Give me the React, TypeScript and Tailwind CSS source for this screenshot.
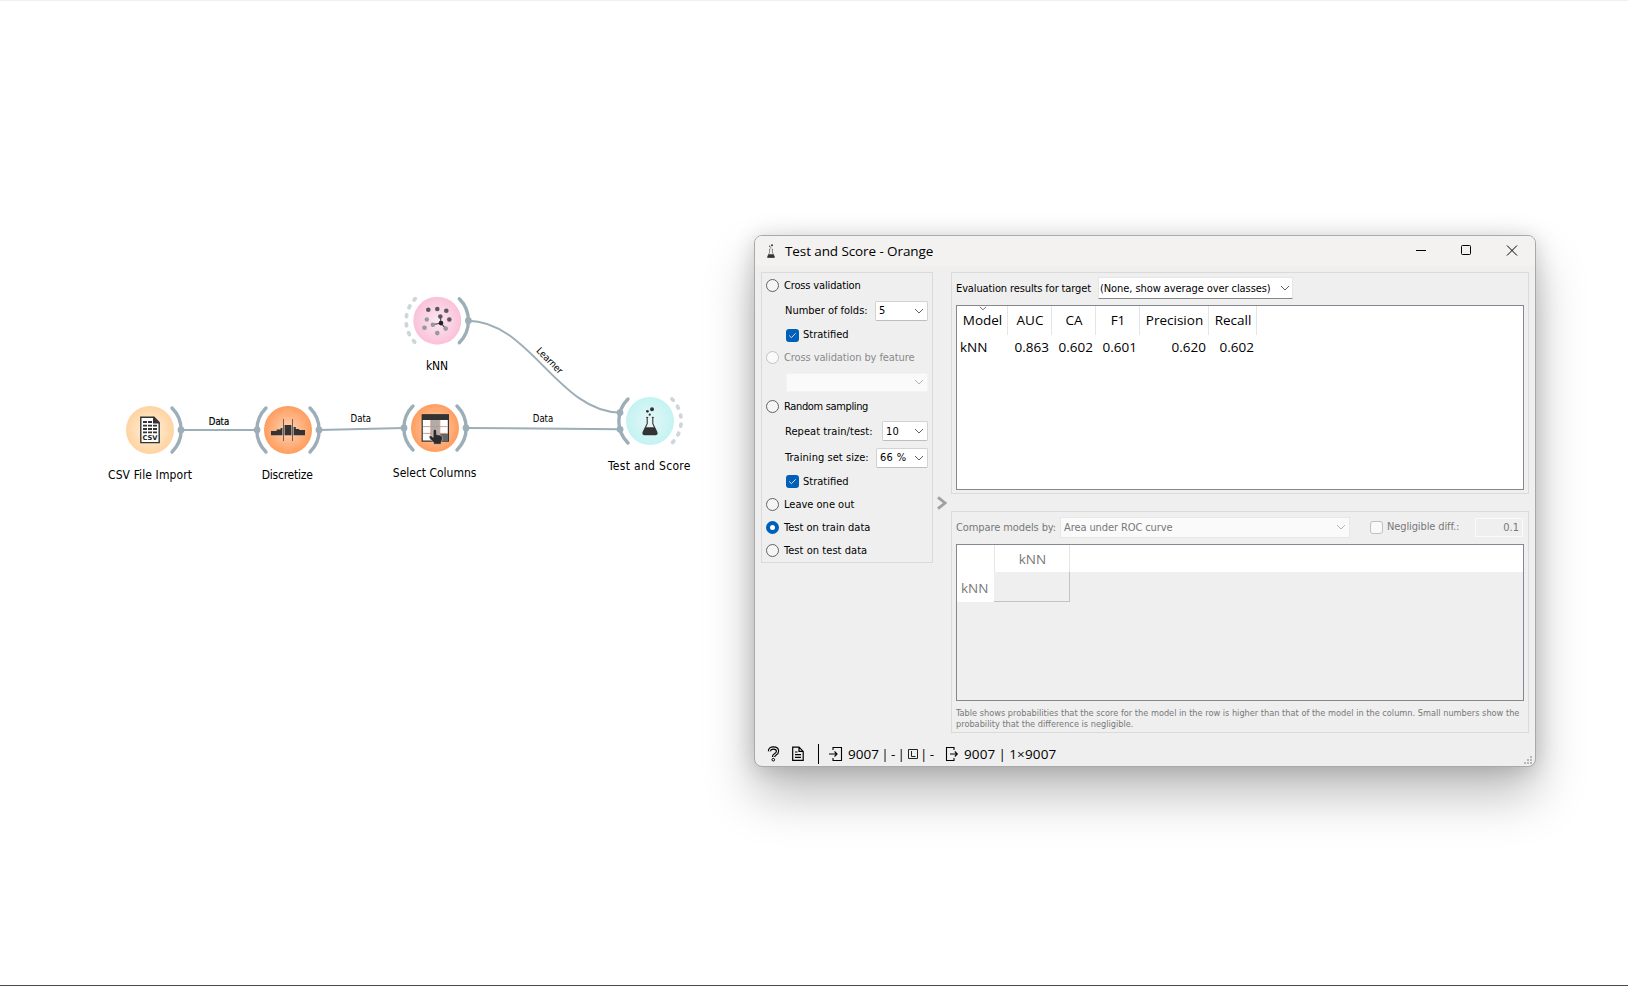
import React from "react";

const ROW = "flex items-center whitespace-nowrap";

function Chevron({ className = "text-[#5f5f5f]" }: { className?: string }) {
  return (
    <svg className={className} width="10" height="6" viewBox="0 0 10 6" fill="none" stroke="currentColor">
      <path d="M1 1l4 4 4-4" />
    </svg>
  );
}

function Radio({ checked, disabled }: { checked?: boolean; disabled?: boolean }) {
  if (checked) return <span className="h-[13px] w-[13px] shrink-0 rounded-full border-4 border-[#005fb8] bg-white" />;
  return (
    <span
      className={
        disabled
          ? "h-[13px] w-[13px] shrink-0 rounded-full border border-[#c3c3c3] bg-[#fafafa]"
          : "h-[13px] w-[13px] shrink-0 rounded-full border border-[#626262] bg-[#f5f5f5]"
      }
    />
  );
}

function Check() {
  return (
    <span className="flex h-[13px] w-[13px] shrink-0 items-center justify-center rounded-[3px] bg-[#005fb8]">
      <svg width="9" height="7" viewBox="0 0 9 7" fill="none" stroke="#cfe2f5">
        <path d="M1.2 3.5l2.2 2.2 4.3-4.4" />
      </svg>
    </span>
  );
}

function Option({ label, tracking = "", checked, disabled }: { label: string; tracking?: string; checked?: boolean; disabled?: boolean }) {
  return (
    <div className={`${ROW} gap-[5px] pl-1 ${disabled ? "text-[#8a8a8a]" : ""}`}>
      <Radio checked={checked} disabled={disabled} />
      <span className={`pt-0.5 ${tracking}`}>{label}</span>
    </div>
  );
}

function Spin({ value, size }: { value: string; size: string }) {
  return (
    <span className={`${size} flex h-5 items-center justify-between rounded-[2px] border border-[#d2d2d2] border-b-[#bdbdbd] bg-white pr-[3px] pl-[3px]`}>
      <span className="pt-0.5 tracking-[0.3px]">{value}</span>
      <Chevron />
    </span>
  );
}

function Flask() {
  return (
    <g>
      <path d="M-2.8-3.5v6.2L-6.8 11q-1.1 2.6 1.6 2.6h10.4q2.7 0 1.6-2.6L2.8 2.7v-6.2" fill="none" stroke="#333" strokeWidth="1.1" />
      <path d="M-3.8-3.6h2M1.8-3.6h2" stroke="#333" strokeWidth="1" />
      <path d="M-4.6 6.3h9.2L7 11.6q.6 2-1.4 2H-5.6q-2 0-1.4-2z" fill="#333" />
      <circle cx="-2.6" cy="-9.7" r="1.4" fill="#333" />
      <circle cx="2" cy="-11.7" r="2" fill="#333" />
      <circle cx="-.3" cy="-6.3" r="1.1" fill="#333" />
    </g>
  );
}

const RIGHT = "M22-22A31 31 0 0 1 22 22";
const LEFT = "M-22-22A31 31 0 0 0-22 22";

function Workflow() {
  return (
    <svg className="absolute -top-px left-0 font-['DejaVu_Sans_Condensed','DejaVu_Sans',sans-serif]" width="740" height="560">
      <defs>
        <radialGradient id="cream"><stop offset="0" stopColor="#fff2e0" /><stop offset="1" stopColor="#ffd39f" /></radialGradient>
        <radialGradient id="orange"><stop offset="0" stopColor="#ffd3b6" /><stop offset="1" stopColor="#ff9d5e" /></radialGradient>
        <radialGradient id="pink"><stop offset="0" stopColor="#fce8f1" /><stop offset="1" stopColor="#fac1d9" /></radialGradient>
        <radialGradient id="aqua"><stop offset="0" stopColor="#e6f7f6" /><stop offset="1" stopColor="#c3f3f3" /></radialGradient>
      </defs>
      <g fill="none" stroke="#9caeb7" strokeWidth="2">
        <path d="M181 430H257M319 430L404 428M466 428L620 429.3M468 320.7C529 320.7 559 412.5 620 412.5" />
      </g>
      <g fill="none" stroke="#9caeb7" strokeWidth="3.4" strokeLinecap="round">
        <path transform="translate(150 430)" d={RIGHT} />
        <path transform="translate(288 430)" d={RIGHT + LEFT} />
        <path transform="translate(435 428)" d={RIGHT + LEFT} />
        <path transform="translate(437.3 320.7)" d={RIGHT} />
        <path transform="translate(650 421)" d={LEFT} />
      </g>
      <g fill="none" stroke="#cdd6db" strokeWidth="3.8" strokeLinecap="round" strokeDasharray="1.8 7.4">
        <path transform="translate(437.3 320.7)" d={LEFT} />
        <path transform="translate(650 421)" d={RIGHT} />
      </g>
      <g fill="#9caeb7">
        <circle cx="181" cy="430" r="3.4" /><circle cx="257" cy="430" r="3.4" /><circle cx="319" cy="430" r="3.4" />
        <circle cx="404" cy="428" r="3.4" /><circle cx="466" cy="428" r="3.4" /><circle cx="468.4" cy="320.7" r="3.4" />
        <circle cx="620" cy="412.6" r="3.4" /><circle cx="620" cy="429.3" r="3.4" />
      </g>
      <circle cx="150" cy="430" r="24" fill="url(#cream)" />
      <circle cx="288" cy="430" r="24" fill="url(#orange)" />
      <circle cx="435" cy="428" r="24" fill="url(#orange)" />
      <circle cx="437.3" cy="320.7" r="24" fill="url(#pink)" />
      <circle cx="650" cy="421" r="24" fill="url(#aqua)" />

      <g transform="translate(150 430)">
        <path d="M-9.2-12.8H4L9.2-7.4V12.6H-9.2z" fill="#fff" stroke="#333" strokeWidth="1.4" />
        <path d="M3-13.4L9.8-6.6H3z" fill="#333" />
        <path d="M-7-8H2M-7-4.4H7M-7-1H7M-7 2.4H7" stroke="#333" strokeWidth="1.9" strokeDasharray="4 1" />
        <text x="0" y="10.4" textAnchor="middle" fontSize="6.6" fontWeight="bold" fill="#222" textLength="15" lengthAdjust="spacingAndGlyphs">CSV</text>
      </g>
      <g transform="translate(288 430)" fill="#333">
        <path d="M-17 5.3V1h5.6v-1.6h4V-2h1.8v7.3zM-3.4-5H3.4V5.3H-3.4zM5.6 5.3V-3h2.2v2h3.4v1H17v5.3z" />
        <path d="M-4.5-11V11M4.5-11V11" stroke="#555" strokeWidth=".9" />
      </g>
      <g transform="translate(435 428)">
        <path d="M-12.8-13.2H13.4V13.2H-12.8z" fill="#fff" stroke="#333" strokeWidth="1.2" />
        <path d="M-4-8H4.6V13H-4z" fill="#b3aba7" />
        <path d="M5 5.5H13V13H5z" fill="#666" />
        <path d="M-13-13.6H13.8V-8H-13z" fill="#333" />
        <path d="M-12-1.4H12.6M-12 5.4H12.6M-4.2-8V12.4M4.8-8V12.4" stroke="#bf9b88" strokeWidth=".9" />
        <path
          d="M-1.8 3q0-1.8 1.7-1.8T1.6 3v3.6q3.6.2 4.9 1.2 1.2 1 .9 3.4l-1.2 3v2H-1.4v-1.8L-5.4 10.2q-1.2-1.9.4-2.4 1.7-.3 3.2 1.6z"
          fill="#2b2b2b"
          stroke="#fff"
          strokeWidth=".4"
        />
      </g>
      <g transform="translate(437.3 320.7)">
        <g fill="#5a5a5a">
          <circle cx="-9" cy="-11" r="2.3" /><circle cx="0" cy="-11.7" r="2.3" /><circle cx="9" cy="-10" r="2.3" />
          <circle cx="12" cy="-1.2" r="2.3" /><circle cx="3" cy="-4.2" r="2.3" />
        </g>
        <path d="M3-4.2L3.7 2.4-4.3 4M3.7 2.4L8.3 7.8" stroke="#555" strokeWidth="1.2" fill="none" />
        <g fill="#999">
          <circle cx="-10.5" cy="-1.2" r="2.2" /><circle cx="-12.8" cy="7" r="2.3" /><circle cx="-4.4" cy="4" r="2.3" />
          <circle cx="0" cy="12.4" r="2.3" /><circle cx="8.4" cy="7.9" r="2.3" />
        </g>
        <circle cx="3.7" cy="2.4" r="2.3" fill="#222" />
      </g>
      <g transform="translate(650 421)"><Flask /></g>

      <g fontSize="12" textAnchor="middle" fill="#000">
        <text x="150" y="479" textLength="84">CSV File Import</text>
        <text x="287.3" y="479" textLength="51">Discretize</text>
        <text x="434.6" y="477" textLength="83.5">Select Columns</text>
        <text x="437" y="370" textLength="22">kNN</text>
        <text x="649.2" y="470" textLength="82.5">Test and Score</text>
      </g>
      <g fontSize="9.6" textAnchor="middle" fill="#000">
        <text x="219" y="425" textLength="20.4" stroke="#000" strokeWidth=".2">Data</text>
        <text x="360.8" y="422" textLength="20.4">Data</text>
        <text x="543" y="422" textLength="20.4">Data</text>
        <text transform="translate(547.4 362.8) rotate(45)" textLength="33">Learner</text>
      </g>
    </svg>
  );
}

function TitleBar() {
  return (
    <div className="flex h-[30px] shrink-0 items-center justify-between bg-[#f3f2f1] pr-[17px] pl-2.5">
      <div className="flex items-center gap-2">
        <svg width="12" height="14" viewBox="-9 -14 18 28"><Flask /></svg>
        <span className="font-['Open_Sans',sans-serif] text-[13.5px] tracking-[-0.1px]">Test and Score - Orange</span>
      </div>
      <svg className="mb-0.5" width="104" height="12" viewBox="0 0 104 12" fill="none" stroke="#000">
        <path d="M2 6.5H12" />
        <rect x="47.5" y="1.5" width="9" height="9" rx="1" />
        <path d="M93 1.5l10 10M103 1.5l-10 10" />
      </svg>
    </div>
  );
}

function Sampling() {
  return (
    <div className="flex h-[291px] w-[172px] shrink-0 flex-col border border-[#dadada] text-[11px]">
      <div className="flex h-[25px]"><Option label="Cross validation" tracking="tracking-[-0.15px]" /></div>
      <div className={`${ROW} h-[25px] justify-between pr-1 pl-[23px]`}><span className="pt-0.5">Number of folds:</span><Spin value="5" size="w-[53px]" /></div>
      <div className={`${ROW} h-6 gap-1 pl-6`}><Check /><span className="pt-px">Stratified</span></div>
      <div className="flex h-[21px]"><Option label="Cross validation by feature" tracking="tracking-[-0.1px]" disabled /></div>
      <div className="flex h-[28px] items-center justify-end pr-1">
        <span className="flex h-[19px] w-[142px] items-center justify-end border border-[#f3f3f3] bg-[#fafafa] pr-[3px]"><Chevron className="text-[#b4b4b4]" /></span>
      </div>
      <div className="flex h-[21px]"><Option label="Random sampling" tracking="tracking-[-0.35px]" /></div>
      <div className={`${ROW} h-[28px] justify-between pr-1 pl-[23px]`}><span className="pt-0.5 tracking-[0.05px]">Repeat train/test:</span><Spin value="10" size="w-[46px]" /></div>
      <div className={`${ROW} h-[25px] justify-between pr-1 pl-[23px]`}><span className="pt-0.5 tracking-[0.05px]">Training set size:</span><Spin value="66 %" size="w-[52px]" /></div>
      <div className={`${ROW} h-[23px] gap-1 pl-6`}><Check /><span className="pt-0.5">Stratified</span></div>
      <div className="flex h-[23px]"><Option label="Leave one out" /></div>
      <div className="flex h-[23px]"><Option label="Test on train data" checked /></div>
      <div className="flex h-[23px]"><Option label="Test on test data" tracking="tracking-[0.05px]" /></div>
    </div>
  );
}

const COLS = "grid grid-cols-[51px_44px_44px_44px_69px_48px]";

function Results() {
  return (
    <div className="h-[222px] border border-[#dadada] px-1 pt-1">
      <div className="flex h-[22px] items-center text-[11px] whitespace-nowrap">
        <span className="w-[142px] pt-[3px] tracking-[-0.12px]">Evaluation results for target</span>
        <span className="flex h-[22px] w-[195px] items-center justify-between border border-[#e6e6e6] border-b-[#868686] bg-white pr-[2px] pl-px">
          <span className="pt-[3px] tracking-[-0.08px]">(None, show average over classes)</span>
          <Chevron />
        </span>
      </div>
      <div className="mt-[6px] h-[185px] border border-[#828790] bg-white font-['Open_Sans',sans-serif] text-[13.5px]">
        <div className={`${COLS} relative h-[27px] text-center leading-[29px]`}>
          {["Model", "AUC", "CA", "F1", "Precision", "Recall"].map((t) => (
            <span key={t} className="border-r border-[#e5e5e5] pl-px">{t}</span>
          ))}
          <svg className="absolute top-0 left-[22px]" width="8" height="5" fill="none" stroke="#777"><path d="M.8.8l3.2 3 3.2-3" /></svg>
        </div>
        <div className={`${COLS} h-[28px] pt-px text-right leading-[27px]`}>
          <span className="pl-[3px] text-left">kNN</span>
          {["0.863", "0.602", "0.601", "0.620", "0.602"].map((t, i) => (
            <span key={i} className="pr-[3px]">{t}</span>
          ))}
        </div>
      </div>
    </div>
  );
}

function Compare() {
  return (
    <div className="mt-[17px] h-[222px] border border-[#dadada] px-1 pt-1 text-[#787878]">
      <div className="flex h-[22px] items-center text-[11px] whitespace-nowrap">
        <span className="w-[104px] pt-[3px] tracking-[-0.1px]">Compare models by:</span>
        <span className="flex h-[21px] w-[290px] items-center justify-between border border-[#e8e8e8] bg-[#fafafa] pr-[3px] pl-[3px]">
          <span className="pt-[3px] tracking-[-0.1px]">Area under ROC curve</span>
          <Chevron className="text-[#b4b4b4]" />
        </span>
        <span className="ml-5 h-[13px] w-[13px] rounded-[3px] border border-[#c0c0c0] bg-[#f9f9f9]" />
        <span className="ml-1 flex-1 pt-px tracking-[-0.12px]">Negligible diff.:</span>
        <span className="mr-px flex h-[19px] w-[48px] items-center justify-end border border-[#fafafa] pt-[3px] pr-[3px]">0.1</span>
      </div>
      <div className="mt-[6px] h-[157px] border border-[#828790] bg-[#efefef] font-['Open_Sans',sans-serif] text-[13.5px]">
        <div className="flex h-[27px] bg-white text-center leading-[28px]">
          <span className="w-[38px] border-r border-[#e5e5e5]" />
          <span className="w-[75px] border-r border-[#e5e5e5] pl-px">kNN</span>
        </div>
        <div className="flex h-[30px] leading-[32px]">
          <span className="w-[37px] bg-white pl-1">kNN</span>
          <span className="w-[76px] border-r border-b border-[#c3c3c3]" />
        </div>
      </div>
      <p className="mt-[7px] text-[9.14px] leading-[11px] whitespace-nowrap">
        Table shows probabilities that the score for the model in the row is higher than that of the model in the column. Small numbers show the
        <br />
        probability that the difference is negligible.
      </p>
    </div>
  );
}

function StatusBar() {
  return (
    <div className="mt-auto flex h-[24px] items-center pl-3 font-['Open_Sans',sans-serif] text-[13.5px] [word-spacing:-1.2px] whitespace-nowrap">
      <svg width="13" height="16" viewBox="0 0 13 16" fill="none">
        <path d="M2.5 5.2Q2.5 2 6.5 2t4 3.2q0 1.8-2.2 3.2-1.8 1-1.8 2.6" stroke="#000" strokeWidth="3.4" />
        <path d="M2.5 5.2Q2.5 2 6.5 2t4 3.2q0 1.8-2.2 3.2-1.8 1-1.8 2.4" stroke="#efefef" strokeWidth="1.1" />
        <circle cx="6.3" cy="13.7" r="1.3" fill="#efefef" stroke="#000" />
      </svg>
      <svg className="ml-[12px]" width="12" height="16" viewBox="0 0 12 16" fill="none" stroke="#000" strokeWidth="1.2">
        <path d="M.7 1.2H7L11.2 5.4V14.4H.7zM7 1.2V5.4H11.2M3 6H5.5M3 8.7H9M3 11.4H9" />
      </svg>
      <span className="ml-[14px] h-5 w-px bg-black" />
      <svg className="ml-2.5" width="14" height="16" viewBox="0 0 14 16" fill="none" stroke="#000" strokeWidth="1.1">
        <path d="M4 4V1.5H12.5V14.5H4V12M0 8H8M5.5 5.5L8 8 5.5 10.5" />
      </svg>
      <span className="ml-[5px] w-[60px]">9007 | - |</span>
      <svg width="10" height="10" viewBox="0 0 10 10" fill="none" stroke="#222"><path d="M.5.5H9.5V9.5H.5zM3.5 2V7.5H7.5" /></svg>
      <span className="ml-0.5 w-[25px]">| -</span>
      <svg width="14" height="16" viewBox="0 0 14 16" fill="none" stroke="#000" strokeWidth="1.1">
        <path d="M9 4V1.5H1.5V14.5H9V12M5 8H12M9.8 5.5L12.3 8 9.8 10.5" />
      </svg>
      <span className="ml-[5px] tracking-[0.15px] [word-spacing:-0.6px]">9007 | 1×9007</span>
    </div>
  );
}

export default function App() {
  return (
    <div className="relative h-[986px] w-[1628px] overflow-hidden border-t border-b border-t-[#f0f0f0] border-b-[#4a4a4a] bg-white text-black">
      <Workflow />
      <div className="absolute top-[234px] left-[754px] flex h-[532px] w-[782px] flex-col overflow-hidden rounded-lg border border-[#a9a9a9] bg-[#efefef] font-['DejaVu_Sans_Condensed','DejaVu_Sans',sans-serif] shadow-[0_28px_50px_rgba(0,0,0,0.26),0_2px_21px_rgba(0,0,0,0.17)]">
        <TitleBar />
        <div className="flex pt-1.5 pr-1.5 pl-1.5">
          <Sampling />
          <div className="flex w-[18px] shrink-0 justify-center pt-[224px]">
            <svg width="10" height="14" viewBox="0 0 10 14" fill="none" stroke="#a0a0a0" strokeWidth="2.8"><path d="M1 1.3L8 7l-7 5.7" /></svg>
          </div>
          <div className="min-w-0 flex-1">
            <Results />
            <Compare />
          </div>
        </div>
        <StatusBar />
        <svg className="absolute right-[3px] bottom-[2px]" width="8" height="8" fill="#b8b8b8">
          <path d="M6 0h2v2H6zM6 3h2v2H6zM3 3h2v2H3zM0 6h2v2H0zM3 6h2v2H3zM6 6h2v2H6z" />
        </svg>
      </div>
    </div>
  );
}
